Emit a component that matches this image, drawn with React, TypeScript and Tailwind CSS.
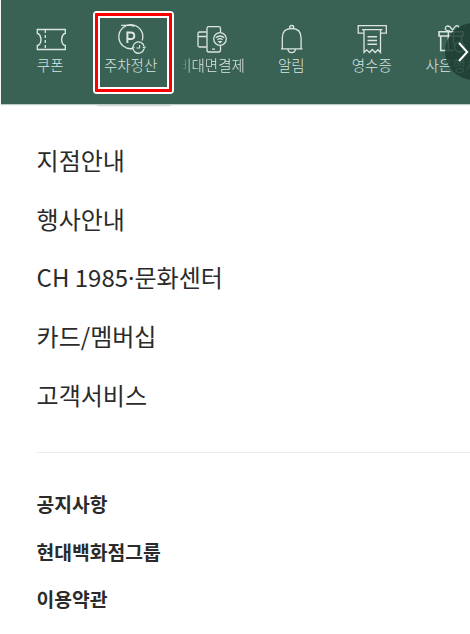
import React from 'react';

const iconProps = {
  fill: 'none',
  stroke: '#dce5e1',
  strokeWidth: 1.3,
  className: 'block shrink-0 overflow-visible',
};

function CouponIcon() {
  return (
    <svg width="30" height="32" viewBox="0 0 30 32" {...iconProps}>
      <path d="M2.3 5.5H30.3V9.6H29.3Q26.6 11.5 26.6 15.5Q26.6 19.5 29.3 21.4H30.3V25.5H2.3V21.4H3.3Q6 19.5 6 15.5Q6 11.5 3.3 9.6H2.3Z" />
      <path d="M10.3 6V25" strokeDasharray="3 2" />
    </svg>
  );
}

function ParkingIcon() {
  return (
    <svg width="30" height="32" viewBox="0 0 30 32" {...iconProps}>
      <path d="M5.2 1.3H14.5Q16.5 1.3 18.3 2.4" />
      <path d="M17 24.5A12 12 0 1 1 26.2 16.5" />
      <path d="M11.4 19V8.5H14.6Q18.3 8.5 18.3 11.8Q18.3 15.1 14.6 15.1H11.4" strokeWidth="2" />
      <path d="M28.1 22.5A5.7 5.7 0 1 0 28 25" />
      <path d="M15.8 23.2H18.5M26.8 22.8L28.3 24.2L29.5 22.6M23.6 21V24H20.4" strokeWidth="1.1" />
    </svg>
  );
}

function MobilePayIcon() {
  return (
    <svg width="30" height="32" viewBox="0 0 30 32" {...iconProps}>
      <path d="M10.5 8H3.5Q2 8 2 9.5V21.5Q2 23 3.5 23H10.5M2 12.5H10.5" />
      <path d="M24.5 8V4.5Q24.5 2.7 22.7 2.7H12.8Q11 2.7 11 4.5V26Q11 28 12.8 28H22.7Q24.5 28 24.5 26V21.5M16 25.2H19" />
      <circle cx="24" cy="15" r="6.3" />
      <path d="M19.8 13.7Q24 10.3 28.2 13.7M21.4 15.7Q24 13.7 26.6 15.7" />
      <path d="M23 17.6L24 18.6L25 17.6Z" />
    </svg>
  );
}

function BellIcon() {
  return (
    <svg width="30" height="32" viewBox="0 0 30 32" {...iconProps}>
      <path d="M6.3 24.5V14Q6.3 4.5 15.7 4.5Q25.1 4.5 25.1 14V24.5M5 24.8H26.4" />
      <path d="M13.7 4.5V3.3Q13.7 1.5 15.7 1.5Q17.7 1.5 17.7 3.3V4.5M11.9 25Q12.3 28.6 15.7 28.6Q19.1 28.6 19.5 25" />
    </svg>
  );
}

function ReceiptIcon() {
  return (
    <svg width="30" height="32" viewBox="0 0 30 32" {...iconProps}>
      <path d="M6.8 9.2H1.2V1.7H29.3V9.2H23.7M5 5.7H25.5" />
      <path d="M7 5.7V28.5L9.7 25.8L12.5 28.5L15.3 25.5L18.2 28.5L21 25.8L23.5 28.5V5.7" />
      <path d="M10.5 12.7H20M10.5 16.5H20M10.5 20.3H20" strokeWidth="1.6" />
    </svg>
  );
}

function GiftIcon() {
  return (
    <svg width="30" height="32" viewBox="0 0 30 32" {...iconProps}>
      <path d="M2 7.7H26V12H2ZM3.7 12V26.5H17M24.5 12V18" strokeWidth="1.6" />
      <path d="M11.3 7.7V26.5M16.5 7.7V20" />
      <path d="M13 7Q8 7 8.3 4.2Q9.2 .8 12.8 2.6L15.5 6L18.5 2.2Q21.3 .8 22 3.8" />
      <circle cx="22.5" cy="23" r="5" />
    </svg>
  );
}

const shortcuts = [
  { label: '쿠폰', Icon: CouponIcon },
  { label: '주차정산', Icon: ParkingIcon },
  { label: '비대면결제', Icon: MobilePayIcon, faded: true },
  { label: '알림', Icon: BellIcon },
  { label: '영수증', Icon: ReceiptIcon },
  { label: '사은행사', Icon: GiftIcon },
];

const menu = ['지점안내', '행사안내', 'CH 1985·문화센터', '카드/멤버십', '고객서비스'];
const links = ['공지사항', '현대백화점그룹', '이용약관'];

// The Latin middle dot is half as wide as the Korean font's own.
function withNarrowDot(text: string) {
  const [before, after] = text.split('·');
  if (after === undefined) return text;
  return (
    <>
      {before}
      <span className="font-['Noto_Sans',sans-serif] leading-none">·</span>
      {after}
    </>
  );
}

export default function App() {
  return (
    <div className="relative h-[634px] w-[470px] overflow-hidden bg-white font-['Noto_Sans_CJK_KR',sans-serif] text-[#2b2b2b]">
      <div className="absolute left-[97px] top-[102px] h-[3px] w-[74px] bg-[#396255]/60 blur-[1px]" />
      <header className="relative ml-px h-[104px] overflow-hidden bg-[#396255] shadow-[0_1px_1px_#bccbc5]">
        <nav className="flex w-max pl-[9px] pt-6">
          {shortcuts.map(({ label, Icon, faded }) => (
            <div key={label} className="flex w-[80.4px] shrink-0 flex-col items-center">
              <Icon />
              <span
                className={`-mt-0.5 whitespace-nowrap text-[14.5px] font-light leading-[21px] text-[#dce5e1] ${
                  faded ? 'pl-px [mask-image:linear-gradient(to_right,transparent_5px,black_14px)]' : ''
                }`}
              >
                {label}
              </span>
            </div>
          ))}
        </nav>
        <div className="absolute left-[92px] top-[11px] h-[83px] w-[81px] rounded-[4px] border-2 border-white">
          <div className="h-full w-full rounded-[1px] border-3 border-[#fb0000]">
            <div className="h-full w-full border-2 border-white" />
          </div>
        </div>
        <button aria-label="다음" className="absolute left-[444px] top-[23px] flex h-[57px] w-[57px] items-center rounded-full bg-[#1d3d32]/85 pl-[13px]">
          <svg width="11" height="20" viewBox="0 0 11 20" fill="none" stroke="white" strokeWidth="2">
            <path d="M1 1L9.2 10L1 19" />
          </svg>
        </button>
      </header>
      <main className="pl-9">
        <ul className="pl-[0.6px] pt-[27px]">
          {menu.map((item) => (
            <li key={item} className="h-[58.7px] text-[24px] leading-[58.7px]">{withNarrowDot(item)}</li>
          ))}
        </ul>
        <hr className="mt-[28px] border-[#ededed]" />
        <ul className="pl-[0.6px] pt-7">
          {links.map((item) => (
            <li key={item} className="h-[47.3px] text-[19.3px] font-bold leading-[47.3px]">{item}</li>
          ))}
        </ul>
      </main>
    </div>
  );
}
